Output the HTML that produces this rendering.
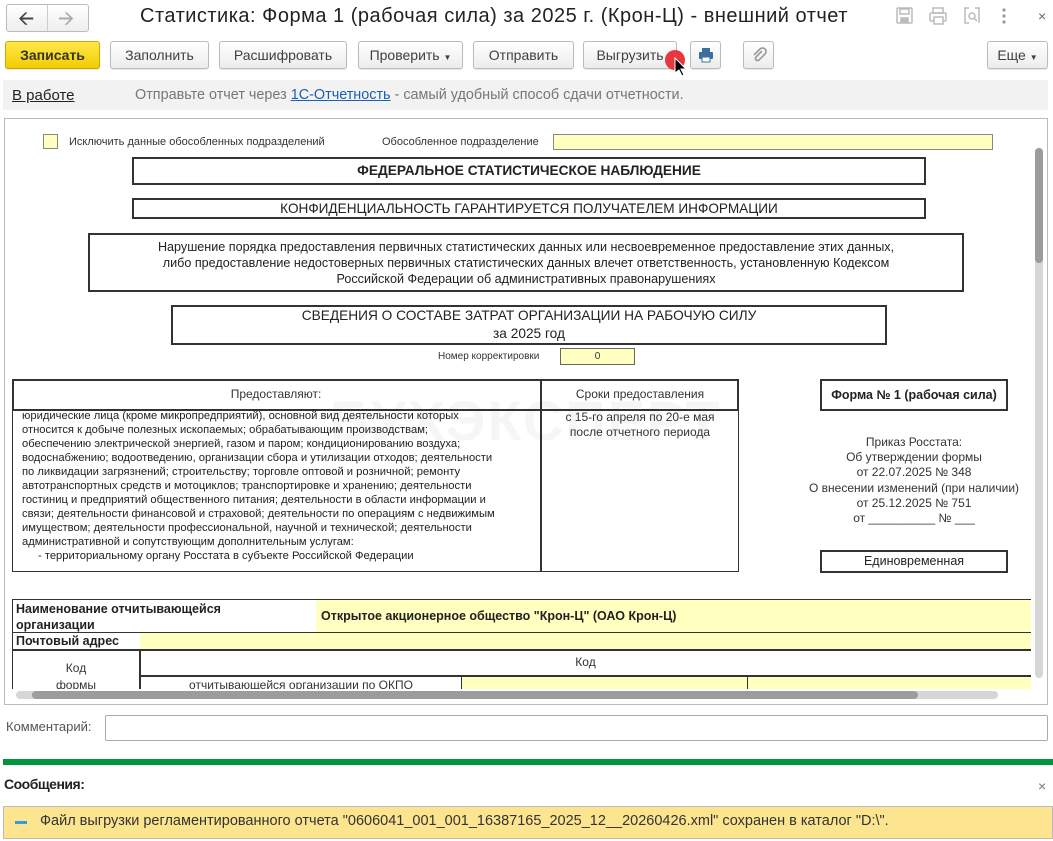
<!DOCTYPE html>
<html><head><meta charset="utf-8"><style>
*{box-sizing:border-box;margin:0;padding:0}
body{width:1053px;height:841px;background:#fff;font-family:"Liberation Sans",sans-serif;color:#333;position:relative;overflow:hidden}
.a{position:absolute}
.btn{position:absolute;top:41px;height:28px;border:1px solid #bbb;border-radius:3px;background:linear-gradient(#fff,#ececec);font-size:14px;color:#404040;text-align:center;line-height:26px;box-shadow:0 1px 1px rgba(0,0,0,.1)}
.bx{position:absolute;border:2px solid #333;text-align:center;color:#222}
.t11{font-size:11px;color:#333}
.yl{background:#ffffc0}
</style></head><body>
<div class="a" style="left:6px;top:4px;width:83px;height:28px;border:1px solid #bbb;border-radius:3px;background:linear-gradient(#fff,#eee)"></div>
<div class="a" style="left:47px;top:5px;width:1px;height:26px;background:#ccc"></div>
<div class="a" style="left:18px;top:4px;font-size:20px;color:#444">&#129128;</div>
<div class="a" style="left:58px;top:4px;font-size:20px;color:#aaa">&#129130;</div>
<div class="a" style="left:140px;top:5px;font-size:20px;letter-spacing:0.5px;color:#222;white-space:nowrap">Статистика: Форма 1 (рабочая сила) за 2025 г. (Крон-Ц) - внешний отчет</div>
<svg class="a" style="left:895px;top:6px" width="160" height="20">
<g fill="none" stroke="#bbb" stroke-width="1.5">
<rect x="2" y="2" width="15" height="15" rx="1"/><rect x="5" y="3" width="9" height="5"/><rect x="6" y="12" width="7" height="4" fill="#bbb"/>
<rect x="38" y="2" width="10" height="5"/><rect x="35" y="7" width="16" height="8" rx="1"/><rect x="39" y="11" width="9" height="7" fill="#fff"/>
<path d="M74 2h-4v15h4M80 2h4v15"/><circle cx="77" cy="10" r="3"/><path d="M79 12l3 3"/>
</g>
<g fill="#999"><circle cx="109" cy="4" r="1.6"/><circle cx="109" cy="10" r="1.6"/><circle cx="109" cy="16" r="1.6"/></g>
<text x="143" y="15" font-size="14" fill="#666" font-family="Liberation Sans">×</text>
</svg>
<div class="btn" style="left:5px;width:95px;background:linear-gradient(#ffe94a,#f3cc00);border-color:#c9a800;font-weight:bold;color:#333">Записать</div>
<div class="btn" style="left:110px;width:99px">Заполнить</div>
<div class="btn" style="left:219px;width:128px">Расшифровать</div>
<div class="btn" style="left:358px;width:105px">Проверить <span style="font-size:8px">▼</span></div>
<div class="btn" style="left:473px;width:101px">Отправить</div>
<div class="btn" style="left:583px;width:94px">Выгрузить</div>
<div class="btn" style="left:690px;width:31px"><svg width="16" height="16" style="margin-top:5px"><rect x="4" y="1" width="8" height="4" fill="#3b6fa0"/><rect x="1" y="5" width="14" height="7" rx="1" fill="#3b6fa0"/><rect x="4" y="10" width="8" height="5" fill="#fff" stroke="#3b6fa0"/></svg></div>
<div class="btn" style="left:743px;width:31px"><svg width="16" height="16" style="margin-top:5px"><path d="M11 4L5 10a2 2 0 0 0 3 3l6-6a3.5 3.5 0 0 0-5-5L3 8" fill="none" stroke="#999" stroke-width="1.6"/></svg></div>
<div class="btn" style="left:987px;width:61px">Еще <span style="font-size:8px">▼</span></div>
<div class="a" style="left:665px;top:50px;width:20px;height:20px;border-radius:50%;background:#e8383d"></div>
<svg class="a" style="left:674px;top:57px" width="14" height="22"><path d="M1 1v15l4-3 3 6 2-1-3-6h5z" fill="#000" stroke="#fff" stroke-width="1"/></svg>
<div class="a" style="left:3px;top:80px;width:1045px;height:30px;background:#f2f2f2"></div>
<div class="a" style="left:12px;top:87px;font-size:15px;color:#222;text-decoration:underline">В работе</div>
<div class="a" style="left:135px;top:87px;font-size:14.4px;color:#777">Отправьте отчет через <span style="color:#1a5fb4;text-decoration:underline">1С-Отчетность</span> - самый удобный способ сдачи отчетности.</div>
<div class="a" style="left:4px;top:118px;width:1044px;height:587px;border:1px solid #bbb"></div>
<div class="a yl" style="left:43px;top:134px;width:15px;height:15px;border:1px solid #888"></div>
<div class="a t11" style="left:69px;top:136px">Исключить данные обособленных подразделений</div>
<div class="a t11" style="left:382px;top:136px">Обособленное подразделение</div>
<div class="a yl" style="left:553px;top:134px;width:440px;height:16px;border:1px solid #888"></div>
<div class="bx" style="left:132px;top:157px;width:794px;height:28px;font-size:13.7px;font-weight:bold;line-height:24px">ФЕДЕРАЛЬНОЕ СТАТИСТИЧЕСКОЕ НАБЛЮДЕНИЕ</div>
<div class="bx" style="left:132px;top:198px;width:794px;height:21px;font-size:13.6px;line-height:17px">КОНФИДЕНЦИАЛЬНОСТЬ ГАРАНТИРУЕТСЯ ПОЛУЧАТЕЛЕМ ИНФОРМАЦИИ</div>
<div class="bx" style="left:88px;top:233px;width:876px;height:59px;font-size:12.6px;line-height:16px;padding-top:4px">Нарушение порядка предоставления первичных статистических данных или несвоевременное предоставление этих данных,<br>либо предоставление недостоверных первичных статистических данных влечет ответственность, установленную Кодексом<br>Российской Федерации об административных правонарушениях</div>
<div class="bx" style="left:171px;top:305px;width:716px;height:40px;font-size:13.7px;line-height:18px">СВЕДЕНИЯ О СОСТАВЕ ЗАТРАТ ОРГАНИЗАЦИИ НА РАБОЧУЮ СИЛУ<br>за 2025 год</div>
<div class="a" style="left:438px;top:351px;font-size:10px">Номер корректировки</div>
<div class="a yl" style="left:560px;top:348px;width:75px;height:17px;border:1px solid #666;font-size:10px;text-align:center;line-height:15px">0</div>
<div class="a" style="left:330px;top:388px;font-size:56px;font-weight:bold;color:#f6f6f6;letter-spacing:2px">БУХЭКСПЕРТ</div>
<div class="a" style="left:12px;top:379px;width:727px;height:193px;border:1px solid #333"></div>
<div class="a" style="left:12px;top:379px;width:727px;height:32px;border:2px solid #333"></div>
<div class="a" style="left:540px;top:379px;width:2px;height:193px;background:#333"></div>
<div class="a" style="left:12px;top:387px;width:528px;text-align:center;font-size:12px">Предоставляют:</div>
<div class="a" style="left:541px;top:387px;width:198px;text-align:center;font-size:12px">Сроки предоставления</div>
<div class="a" style="left:22px;top:409px;line-height:14px;color:#222;font-size:11.2px">юридические лица (кроме микропредприятий), основной вид деятельности которых<br>относится к добыче полезных ископаемых; обрабатывающим производствам;<br>обеспечению электрической энергией, газом и паром; кондиционированию воздуха;<br>водоснабжению; водоотведению, организации сбора и утилизации отходов; деятельности<br>по ликвидации загрязнений; строительству; торговле оптовой и розничной; ремонту<br>автотранспортных средств и мотоциклов; транспортировке и хранению; деятельности<br>гостиниц и предприятий общественного питания; деятельности в области информации и<br>связи; деятельности финансовой и страховой; деятельности по операциям с недвижимым<br>имуществом; деятельности профессиональной, научной и технической; деятельности<br>административной и сопутствующим дополнительным услугам:<br><span style="padding-left:16px">- территориальному органу Росстата в субъекте Российской Федерации</span></div>
<div class="a" style="left:542px;top:410px;width:196px;text-align:center;font-size:12px;line-height:15px">с 15-го апреля по 20-е мая<br>после отчетного периода</div>
<div class="bx" style="left:820px;top:379px;width:188px;height:32px;font-size:12.5px;font-weight:bold;line-height:28px">Форма № 1 (рабочая сила)</div>
<div class="a" style="left:800px;top:435px;width:228px;text-align:center;font-size:12px;line-height:15.2px">Приказ Росстата:<br>Об утверждении формы<br>от 22.07.2025 № 348<br>О внесении изменений (при наличии)<br>от 25.12.2025 № 751<br>от __________ № ___</div>
<div class="bx" style="left:820px;top:550px;width:188px;height:23px;font-size:12.5px;line-height:19px">Единовременная</div>
<div class="a" style="left:12px;top:599px;width:1019px;height:100px;border-left:1px solid #333;border-top:1px solid #333"></div>
<div class="a yl" style="left:316px;top:600px;width:715px;height:32px"></div>
<div class="a" style="left:16px;top:601px;font-size:12.5px;font-weight:bold;line-height:16px;color:#222">Наименование отчитывающейся<br>организации</div>
<div class="a" style="left:321px;top:609px;font-size:12.5px;font-weight:bold;color:#222">Открытое акционерное общество "Крон-Ц" (ОАО Крон-Ц)</div>
<div class="a" style="left:12px;top:632px;width:1019px;height:1px;background:#333"></div>
<div class="a yl" style="left:140px;top:633px;width:891px;height:17px"></div>
<div class="a" style="left:16px;top:634px;font-size:12.5px;font-weight:bold;color:#222">Почтовый адрес</div>
<div class="a" style="left:12px;top:649px;width:1019px;height:2px;background:#333"></div>
<div class="a" style="left:139px;top:650px;width:2px;height:40px;background:#333"></div>
<div class="a" style="left:140px;top:675px;width:891px;height:2px;background:#333"></div>
<div class="a" style="left:140px;top:655px;width:891px;text-align:center;font-size:12px">Код</div>
<div class="a" style="left:12px;top:660px;width:128px;text-align:center;font-size:12px;line-height:17px">Код<br>формы</div>
<div class="a" style="left:141px;top:678px;width:320px;text-align:center;font-size:12px">отчитывающейся организации по ОКПО</div>
<div class="a yl" style="left:461px;top:677px;width:570px;height:13px;border-left:1px solid #333"></div>
<div class="a" style="left:747px;top:677px;width:1px;height:13px;background:#333"></div>
<div class="a" style="left:5px;top:689px;width:1028px;height:15px;background:#fff"></div>
<div class="a" style="left:16px;top:691px;width:982px;height:8px;border-radius:4px;background:#d6d6d6"></div>
<div class="a" style="left:32px;top:691px;width:886px;height:8px;border-radius:4px;background:#9c9c9c"></div>
<div class="a" style="left:1033px;top:119px;width:14px;height:570px;background:#fff"></div>
<div class="a" style="left:1035px;top:148px;width:8px;height:530px;border-radius:4px;background:#d6d6d6"></div>
<div class="a" style="left:1035px;top:148px;width:8px;height:115px;border-radius:4px;background:#9c9c9c"></div>
<div class="a" style="left:6px;top:719px;font-size:13px;color:#555">Комментарий:</div>
<div class="a" style="left:105px;top:715px;width:943px;height:26px;border:1px solid #aaa;border-radius:2px"></div>
<div class="a" style="left:3px;top:759px;width:1050px;height:6px;background:#00953f"></div>
<div class="a" style="left:4px;top:776px;font-size:14px;color:#222;letter-spacing:-0.5px;font-weight:bold">Сообщения:</div>
<div class="a" style="left:1038px;top:778px;font-size:14px;color:#777">×</div>
<div class="a" style="left:3px;top:806px;width:1050px;height:33px;background:#fde48f;border:1px solid #bbb"></div>
<div class="a" style="left:15px;top:821px;width:12px;height:3px;background:#3a9ad9"></div>
<div class="a" style="left:40px;top:813px;font-size:14.5px;color:#333">Файл выгрузки регламентированного отчета "0606041_001_001_16387165_2025_12__20260426.xml" сохранен в каталог "D:\".</div>
</body></html>
